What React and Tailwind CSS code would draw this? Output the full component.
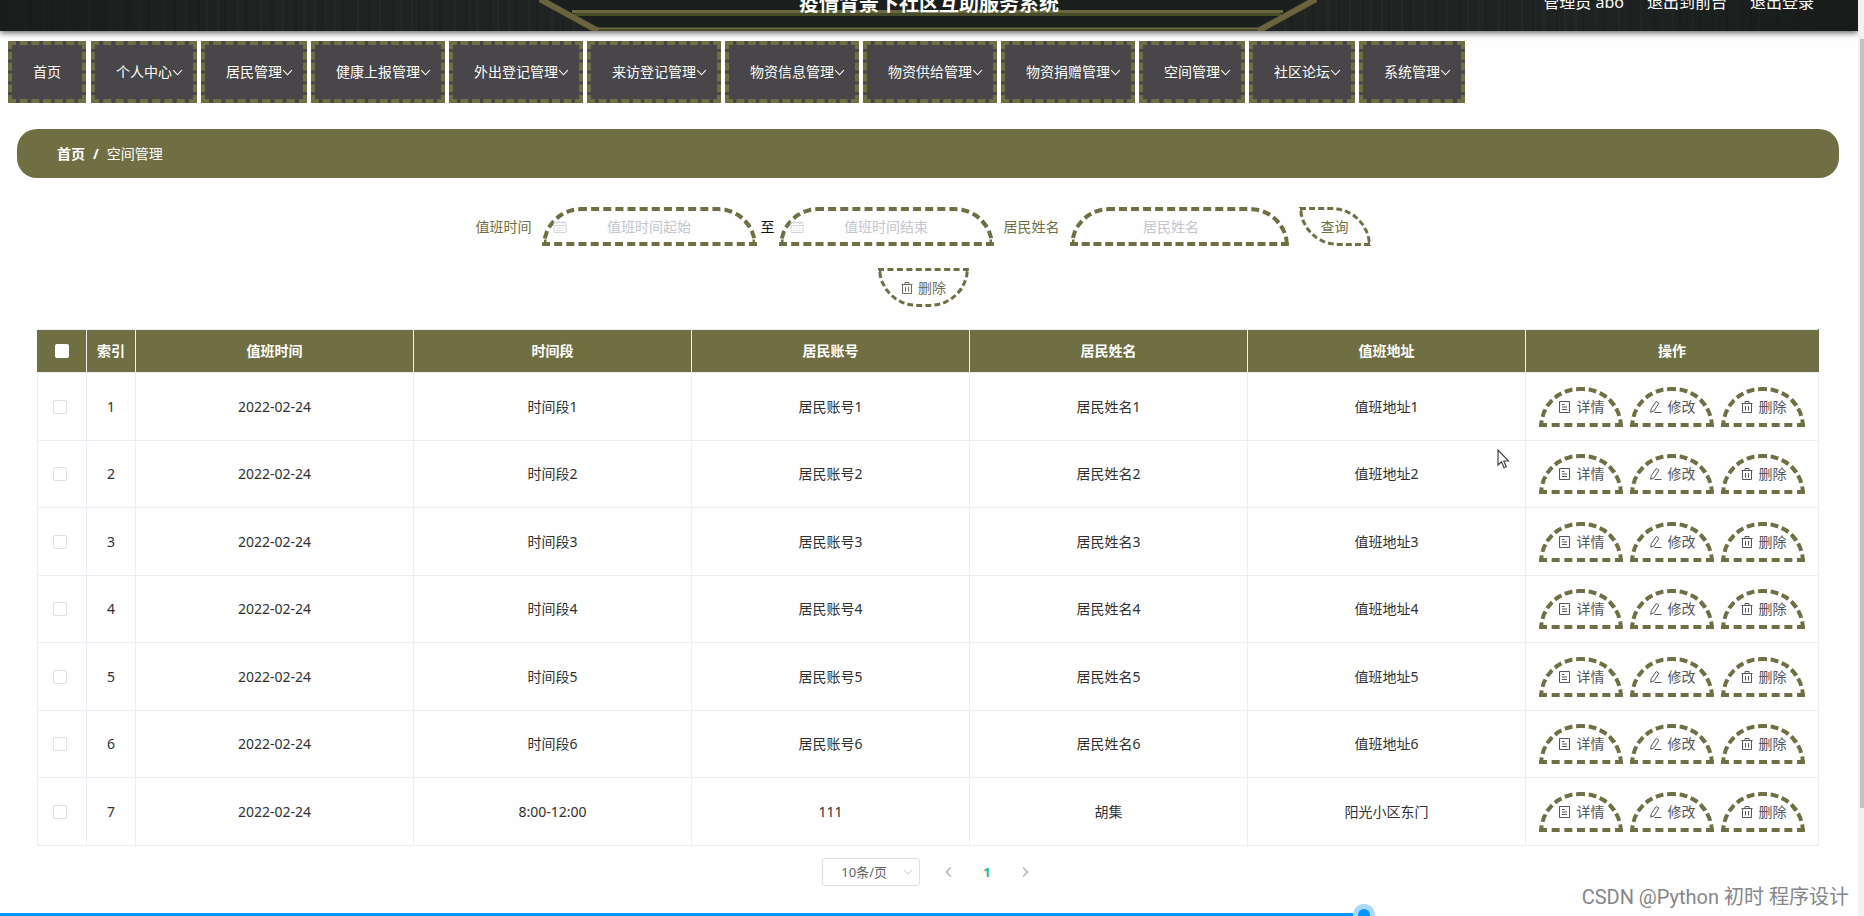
import React from "react";

const menus = ["个人中心", "居民管理", "健康上报管理", "外出登记管理", "来访登记管理", "物资信息管理", "物资供给管理", "物资捐赠管理", "空间管理", "社区论坛", "系统管理"];

const rows = [
  ...[1, 2, 3, 4, 5, 6].map((n) => ["2022-02-24", `时间段${n}`, `居民账号${n}`, `居民姓名${n}`, `值班地址${n}`]),
  ["2022-02-24", "8:00-12:00", "111", "胡集", "阳光小区东门"],
];

const headings = ["值班时间", "时间段", "居民账号", "居民姓名", "值班地址"];

function Icon({ children, className = "size-[14px]" }) {
  return (
    <svg viewBox="0 0 14 14" className={className} fill="none" stroke="currentColor" strokeWidth="1" aria-hidden="true">
      {children}
    </svg>
  );
}

const TrashIcon = () => (
  <Icon>
    <path d="M1.500 3.500h11M2.500 3.500v9h9v-9M5 3.500V1.500h4v2M5.500 6v4.500M8.500 6v4.500" />
  </Icon>
);
const DocIcon = () => (
  <Icon>
    <path d="M1.500 1.500h10v11h-10zM4 4.500h2.500M4 7h5M4 9.500h5" />
  </Icon>
);
const EditIcon = () => (
  <Icon>
    <path d="M7.300 1.500l2.600 1.700-4.800 7.600-3.400 1.500.6-3.700zM5.500 12.500h7" />
  </Icon>
);
const CalendarIcon = () => (
  <Icon>
    <path d="M1 2.500h12v10H1zM1 5.500h12M4 1v3M10 1v3M3.500 8h1.500M6.250 8h1.500M9 8h1.500M3.500 10.500h1.500M6.250 10.500h1.500M9 10.500h1.500" />
  </Icon>
);
const ChevronDown = ({ className }) => (
  <Icon className={className}>
    <path d="M1.500 4l5.500 6 5.500-6" strokeWidth="1.300" />
  </Icon>
);

function Field({ id, placeholder, date }) {
  return (
    <div className="relative">
      {date && (
        <span className="absolute top-[13px] left-[11px] text-[#d3d5dc]">
          <CalendarIcon />
        </span>
      )}
      <input
        id={id}
        type="text"
        aria-label={placeholder}
        placeholder={placeholder}
        className={`${date ? "w-[215px]" : "w-[219px] pr-4"} block h-[39px] rounded-t-[40px] border-4 border-dashed border-[#706f43] bg-transparent text-center text-sm outline-none placeholder:text-[#c4c5d0]`}
      />
    </div>
  );
}

function ActionButton({ icon, children }) {
  return (
    <button type="button" className="flex h-10 w-[84px] items-center justify-center gap-[5px] rounded-t-[40px] border-4 border-dashed border-[#706f43] text-sm text-[#55565c]">
      {icon}
      {children}
    </button>
  );
}

function Header() {
  return (
    <header className="relative mr-[6px] h-[31px] bg-[#1d2320] text-white shadow-[0_2px_6px_rgba(0,0,0,0.6)]">
      <svg className="absolute inset-0 size-full" viewBox="0 0 1858 31" preserveAspectRatio="none" aria-hidden="true">
        <defs>
          <pattern id="grain" width="97" height="31" patternUnits="userSpaceOnUse">
            <rect width="97" height="31" fill="#1f2422" />
            <path d="M5 0v31M31 0v31M52 0v31M78 0v31" stroke="#1b201e" strokeWidth="2" />
            <path d="M13 0v31M24 0v31M44 0v31M67 0v31M89 0v31" stroke="#232927" strokeWidth="2" />
          </pattern>
          <linearGradient id="shade">
            <stop offset="0" stopColor="#141816" stopOpacity="0.6" />
            <stop offset="0.15" stopColor="#141816" stopOpacity="0" />
            <stop offset="0.85" stopColor="#141816" stopOpacity="0" />
            <stop offset="1" stopColor="#141816" stopOpacity="0.7" />
          </linearGradient>
        </defs>
        <rect width="1858" height="31" fill="url(#grain)" />
        <rect width="1858" height="31" fill="url(#shade)" />
        <path d="M539 0L597 31H1258L1316 0Z" fill="#1a1f1e" />
        <g fill="none">
          <path d="M572 11.500H1283M597 29H1258" stroke="#686941" strokeWidth="3" />
          <path d="M574 14.500H1281M597 30.500H1258" stroke="#484c29" strokeWidth="3" />
          <path d="M540 -1L598 31M1316 -1L1258 31" stroke="#6b633d" strokeWidth="6" />
        </g>
      </svg>
      <div className="relative grid h-full grid-cols-[1fr_auto_1fr] items-start overflow-hidden">
        <span />
        <h1 className="-mt-[10px] text-xl leading-7 font-bold">疫情背景下社区互助服务系统</h1>
        <div className="-mt-[10px] flex justify-end gap-[23px] pr-[44px] text-base leading-6">
          <span>管理员 abo</span>
          <a href="#front">退出到前台</a>
          <a href="#logout">退出登录</a>
        </div>
      </div>
    </header>
  );
}

export default function App() {
  return (
    <div className="relative min-h-screen overflow-hidden bg-[#fefefe] font-['Noto_Sans','Noto_Sans_CJK_SC',sans-serif] text-sm text-[#303133]">
      <Header />

      <nav className="flex gap-1 px-2 pt-[10px] text-white">
        <a href="#home" className="mr-px flex h-[62px] items-center border-4 border-dashed border-[#706f43] bg-[#484648] px-[21px]">首页</a>
        {menus.map((name) => (
          <button key={name} type="button" className="flex h-[62px] items-center border-4 border-dashed border-[#706f43] bg-[#484648] pr-[10px] pl-[21px]">
            {name}
            <ChevronDown className="size-[11px]" />
          </button>
        ))}
      </nav>

      <main className="pt-[26px] pr-[25px] pl-[17px]">
        <div className="flex h-[49px] items-center gap-2 rounded-[20px] bg-[#706f43] px-10 text-white">
          <a href="#home" className="font-bold">首页</a>
          <span className="font-bold">/</span>
          <span>空间管理</span>
        </div>

        <div className="pr-[10px]">
          <form className="mt-[29px] flex items-center justify-center text-[#706f43]">
            <label htmlFor="start" className="mr-[10px]">值班时间</label>
            <Field id="start" placeholder="值班时间起始" date />
            <span className="mx-1 text-[#111]">至</span>
            <Field id="end" placeholder="值班时间结束" date />
            <label htmlFor="resident" className="mx-[10px]">居民姓名</label>
            <Field id="resident" placeholder="居民姓名" />
            <button type="button" className="ml-[10px] h-[39px] w-[72px] rounded-tr-[40px] rounded-bl-[40px] border-[3px] border-dashed border-[#706f43]">查询</button>
          </form>

          <div className="mt-[22px] flex justify-center">
            <button type="button" className="flex h-[39px] w-[91px] items-center justify-center gap-1 rounded-b-[40px] border-[3px] border-dashed border-[#706f43] text-[#706f5a]">
              <TrashIcon />
              删除
            </button>
          </div>
        </div>

        <div className="mt-[22px] px-5">
          <table className="w-full table-fixed border-collapse text-center">
            <colgroup>
              <col className="w-[49px]" />
              <col className="w-[49px]" />
              <col />
              <col />
              <col />
              <col />
              <col />
              <col className="w-[293px]" />
            </colgroup>
            <thead>
              <tr className="h-[43px] bg-[#706f43] text-white">
                <th className="border border-[#ebeef5] border-l-[#706f43]">
                  <input type="checkbox" aria-label="全选" className="mx-auto block size-[14px] appearance-none rounded-[2px] bg-white" />
                </th>
                <th className="border border-[#ebeef5]">索引</th>
                {headings.map((h) => (
                  <th key={h} className="border border-[#ebeef5]">{h}</th>
                ))}
                <th className="border border-[#ebeef5] border-r-[#706f43]">操作</th>
              </tr>
            </thead>
            <tbody>
              {rows.map((row, i) => (
                <tr key={i} className="odd:h-[68px] even:h-[67px]">
                  <td className="border border-[#ebeef5] pr-1">
                    <input type="checkbox" aria-label={`选择第${i + 1}行`} className="mx-auto block size-[14px] appearance-none rounded-[2px] border border-[#dcdfe6] bg-white" />
                  </td>
                  <td className="border border-[#ebeef5]">{i + 1}</td>
                  {row.map((cell, j) => (
                    <td key={j} className="border border-[#ebeef5]">{cell}</td>
                  ))}
                  <td className="border border-[#ebeef5]">
                    <div className="flex justify-center gap-[7px]">
                      <ActionButton icon={<DocIcon />}>详情</ActionButton>
                      <ActionButton icon={<EditIcon />}>修改</ActionButton>
                      <ActionButton icon={<TrashIcon />}>删除</ActionButton>
                    </div>
                  </td>
                </tr>
              ))}
            </tbody>
          </table>
        </div>

        <div className="mt-3 flex items-center justify-center pr-1 text-[13px] text-[#606266]">
          <div className="relative">
            <select aria-label="每页条数" className="block h-7 w-[98px] appearance-none rounded-[3px] border border-[#dcdfe6] bg-white pl-[18px] text-[13px]">
              <option>10条/页</option>
            </select>
            <span className="pointer-events-none absolute top-[9px] right-[7px] text-[#c0c4cc]">
              <ChevronDown className="size-[10px]" />
            </span>
          </div>
          <button type="button" aria-label="上一页" className="ml-6 text-[#b4b7bd]">
            <svg viewBox="0 0 10 10" className="size-[10px]" fill="none" stroke="currentColor" strokeWidth="1.600"><path d="M7 0.500L2.500 5 7 9.500" /></svg>
          </button>
          <button type="button" className="mx-[29px] font-bold text-[#2bb58a]">1</button>
          <button type="button" aria-label="下一页" className="text-[#b4b7bd]">
            <svg viewBox="0 0 10 10" className="size-[10px]" fill="none" stroke="currentColor" strokeWidth="1.600"><path d="M3 0.500L7.500 5 3 9.500" /></svg>
          </button>
        </div>
      </main>

      <div className="absolute top-0 right-0 h-full w-[6px] bg-[#f1f1f1]">
        <div className="mt-[39px] ml-[2px] h-[769px] bg-[#c1c1c1]" />
      </div>

      <svg className="absolute top-[449px] left-[1497px] h-[20px] w-[13px]" viewBox="0 0 13 20" aria-hidden="true">
        <path d="M1 1v15l3.500-3.300 2.500 6 2.300-1-2.500-5.700h4.700z" fill="#fff" stroke="#444" strokeWidth="1.200" />
      </svg>

      <p className="absolute right-[15px] bottom-[5px] font-[Roboto,'Noto_Sans_CJK_SC',sans-serif] text-xl leading-7 text-[#85868a] [text-shadow:1px_1px_0_#fff]">CSDN @Python 初时 程序设计</p>

      <div className="absolute bottom-0 left-0 h-[3px] w-[73.2%] bg-[#0095ff]">
        <span className="absolute -top-[9px] -right-[11px] flex size-[22px] items-center justify-center rounded-full bg-[#a8d8fb]">
          <span className="size-3 rounded-full bg-[#0095ff]" />
        </span>
      </div>
    </div>
  );
}
